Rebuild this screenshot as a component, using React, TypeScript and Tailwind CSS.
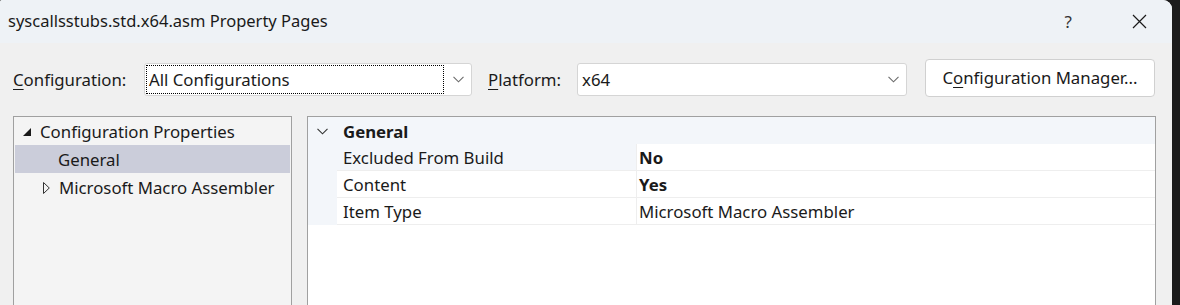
import React from "react";

const font = { fontFamily: '"Noto Sans", "Open Sans", sans-serif' };

function Chevron({ className = "" }: { className?: string }) {
  return (
    <svg width="11" height="7" viewBox="0 0 11 7" className={className}>
      <path d="M0.5 0.8 L5.5 5.8 L10.5 0.8" fill="none" stroke="currentColor" strokeWidth="1.1" />
    </svg>
  );
}

function Combo({ width, children, focused }: { width: string; children: React.ReactNode; focused?: boolean }) {
  return (
    <div className={`${width} mt-[20px] h-[33px] bg-white border border-[#d5d5d5] rounded-[3px] flex items-center shrink-0`}>
      <div className="flex-1 h-full p-[1px] flex">
        <div
          className={`flex-1 flex items-center pl-[2px] ${focused ? "border border-dotted border-black" : "border border-transparent"}`}
        >
          {children}
        </div>
      </div>
      <div className="w-[26px] h-full flex items-center justify-center text-[#6b6b6b]">
        <Chevron />
      </div>
    </div>
  );
}

export default function App() {
  return (
    <div className="w-[1180px] h-[305px] bg-[#1c1c1c] flex overflow-hidden text-[16.8px] text-[#1a1a1a]" style={font}>
      <div className="w-[1172px] h-full bg-[#f0f0f0] rounded-tr-[9px] rounded-tl-[2px] flex flex-col overflow-hidden">
        {/* title bar */}
        <div className="h-[43px] shrink-0 bg-[#eef2f6] flex items-center">
          <div className="pl-[8px] text-[16.5px] text-[#1a1a1a] flex-1">syscallsstubs.std.x64.asm Property Pages</div>
          <div className="text-[17px] text-[#333]">?</div>
          <svg width="15" height="15" viewBox="0 0 15 15" className="ml-[60px] mr-[25px]">
            <path d="M1 1 L14 14 M14 1 L1 14" stroke="#1a1a1a" strokeWidth="1.2" />
          </svg>
        </div>

        {/* config row */}
        <div className="flex items-start pl-[13px] h-[73px] shrink-0">
          <div className="w-[131px] mt-[20px] h-[33px] flex items-center shrink-0">
            <span>
              <span className="underline underline-offset-[3px]">C</span>onfiguration:
            </span>
          </div>
          <Combo width="w-[328px]" focused>
            All Configurations
          </Combo>
          <div className="w-[105px] pl-[16px] mt-[20px] h-[33px] flex items-center shrink-0">
            <span>
              <span className="underline underline-offset-[3px]">P</span>latform:
            </span>
          </div>
          <Combo width="w-[330px]">x64</Combo>
          <div className="ml-[18px] mt-[16px] w-[230px] h-[38px] bg-white border border-[#d0d0d0] rounded-[4px] flex items-center justify-center shrink-0">
            <span>
              C<span className="underline underline-offset-[3px]">o</span>nfiguration Manager...
            </span>
          </div>
        </div>

        {/* panels */}
        <div className="flex pl-[13px] flex-1 min-h-0">
          {/* tree */}
          <div className="w-[279px] h-[200px] border border-[#a0a0a0] bg-[#f4f4f4] p-[1px] pt-0 shrink-0">
            <div className="h-[28px] flex items-center pt-[2px]">
              <svg width="8" height="8" viewBox="0 0 8 8" className="ml-[8px] mr-[9px]">
                <polygon points="8,0 8,8 0,8" fill="#1a1a1a" />
              </svg>
              <span>Configuration Properties</span>
            </div>
            <div className="h-[28px] flex items-center bg-[#cbcdda] pl-[43px] pt-[2px]">General</div>
            <div className="h-[28px] flex items-center pt-[2px]">
              <svg width="7" height="12" viewBox="0 0 7 12" className="ml-[28px] mr-[9px]">
                <polygon points="0.5,0.5 6.3,6 0.5,11.5" fill="none" stroke="#333" strokeWidth="1" />
              </svg>
              <span>Microsoft Macro Assembler</span>
            </div>
          </div>

          {/* property grid */}
          <div className="ml-[15px] w-[849px] h-[200px] border border-[#a0a0a0] bg-white shrink-0 flex flex-col">
            <div className="h-[27px] bg-[#f3f6fa] flex items-center pt-[2px]">
              <div className="w-[29px] flex justify-center text-[#333]">
                <Chevron />
              </div>
              <span className="pl-[6px] font-bold">General</span>
            </div>
            {[
              ["Excluded From Build", "No", true, true],
              ["Content", "Yes", true, false],
              ["Item Type", "Microsoft Macro Assembler", false, false],
            ].map(([name, value, bold, shaded]) => (
              <div key={name as string} className="h-[27px] flex">
                <div className="w-[29px] bg-[#f3f6fa] shrink-0" />
                <div
                  className={`w-[299px] shrink-0 flex items-center pl-[6px] pt-[2px] border-b border-[#eeeeee] ${shaded ? "bg-[#f3f6fa]" : "bg-white"}`}
                >
                  {name}
                </div>
                <div className="flex-1 flex items-center pl-[2px] pt-[2px] border-l border-b border-[#eeeeee]">
                  <span className={bold ? "font-bold" : ""}>{value}</span>
                </div>
              </div>
            ))}
          </div>
        </div>
      </div>
    </div>
  );
}
